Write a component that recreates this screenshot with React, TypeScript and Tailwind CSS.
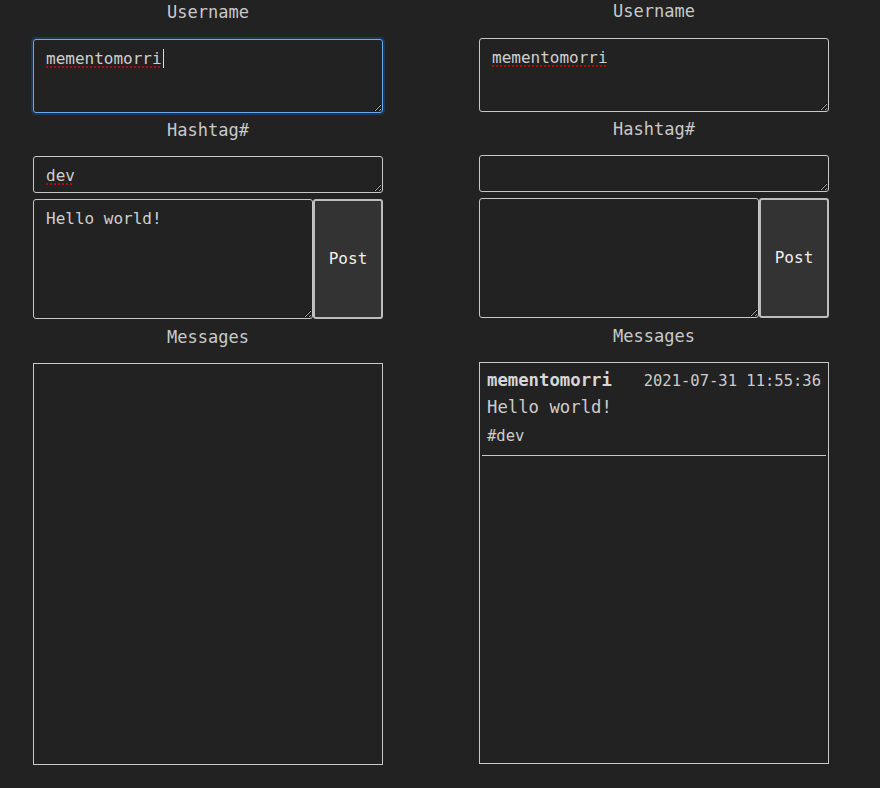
import React from 'react';

interface Post {
  user: string;
  time: string;
  text: string;
  tag: string;
}

interface ColumnProps {
  focused?: boolean;
  username: string;
  hashtag: string;
  message: string;
  posts: Post[];
  shift?: boolean;
}

const mono = { fontFamily: '"DejaVu Sans Mono", "Liberation Mono", monospace' };

// fake textarea so the spellcheck underline and caret can be drawn
const Field: React.FC<{ value: string; height: string; focused?: boolean; squiggle?: boolean; className?: string }> = ({
  value,
  height,
  focused,
  squiggle,
  className = '',
}) => (
  <div
    className={`${height} ${className} resize-y overflow-auto rounded-[3px] border px-[12px] py-[9px] text-[16px] leading-[19px] text-[#cfcfcf] ${
      focused ? 'border-[#6aa8f0] shadow-[0_0_0_2px_#1c3857]' : 'border-[#c8c8c8]'
    }`}
  >
    {value && (
      <span className={squiggle ? 'underline decoration-dotted decoration-[#e00000] underline-offset-[3px]' : ''}>
        {value}
      </span>
    )}
    {focused && <span className="ml-px inline-block h-[19px] w-px bg-[#dddddd] align-[-4px]" />}
  </div>
);

const Label: React.FC<{ text: string; className?: string }> = ({ text, className = '' }) => (
  <div className={`h-6 text-center text-[17px] leading-[22px] text-[#c9c9c9] ${className}`}>{text}</div>
);

const Column: React.FC<ColumnProps> = ({ focused, username, hashtag, message, posts, shift }) => (
  <div className={`flex w-[350px] flex-col ${shift ? 'pt-px' : ''}`}>
    <Label text="Username" className="mb-[14px]" />
    <Field value={username} height="h-[74px]" focused={focused} squiggle />
    <Label text="Hashtag#" className="mt-[6px] mb-[13px]" />
    <Field value={hashtag} height="h-[37px]" squiggle />
    <div className="mt-[6px] flex h-[120px]">
      <Field value={message} height="h-[120px]" className="w-[280px]" />
      <button className="h-[120px] w-[70px] rounded-[3px] border-2 border-[#bdbdbd] bg-[#333333] text-[16px] text-[#f0f0f0]">
        Post
      </button>
    </div>
    <Label text="Messages" className="mt-[7px] mb-[13px]" />
    <div className="h-[402px] border border-[#c8c8c8]">
      {posts.map((p, i) => (
        <div key={i}>
          <div className="flex items-baseline justify-between px-[7px] pt-[5px]">
            <span className="text-[17.3px] font-bold leading-6 text-[#d6d6d6]">{p.user}</span>
            <span className="text-[15.5px] leading-6 text-[#cccccc]">{p.time}</span>
          </div>
          <div className="mt-[2px] px-[7px] text-[17.3px] leading-6 text-[#cccccc]">{p.text}</div>
          <div className="mt-[5px] px-[7px] text-[15.5px] leading-6 text-[#cccccc]">#{p.tag}</div>
          <div className="mx-[2px] mt-[7px] border-t border-[#c8c8c8]" />
        </div>
      ))}
    </div>
  </div>
);

export default function App() {
  return (
    <div className="min-h-[788px] w-full bg-[#222222]" style={mono}>
      <div className="flex gap-[96px] pl-[33px]">
        <Column focused shift username="mementomorri" hashtag="dev" message="Hello world!" posts={[]} />
        <Column
          username="mementomorri"
          hashtag=""
          message=""
          posts={[{ user: 'mementomorri', time: '2021-07-31 11:55:36', text: 'Hello world!', tag: 'dev' }]}
        />
      </div>
    </div>
  );
}
